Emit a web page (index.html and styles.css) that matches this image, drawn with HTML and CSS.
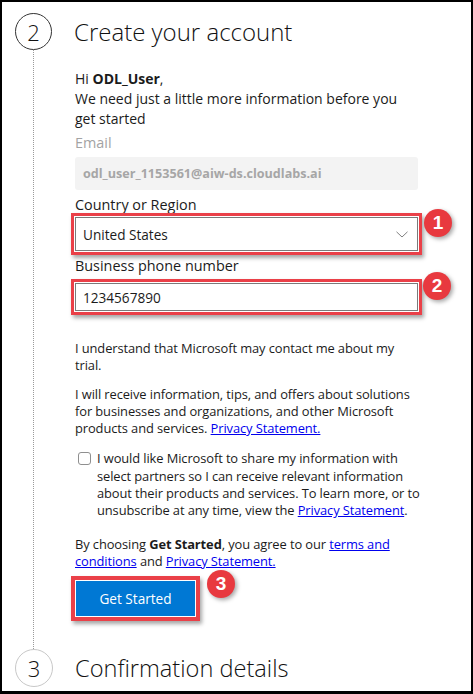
FILE: index.html
```html
<!DOCTYPE html>
<html lang="en">
<head>
<meta charset="utf-8">
<title>Create your account</title>
<link rel="stylesheet" href="styles.css">
</head>
<body>
<div class="frame">
  <div class="timeline">
    <div class="step-head step-head--current">
      <div class="step-num">2</div>
      <h1 class="step-title">Create your account</h1>
    </div>
    <div class="step-body">
      <p class="greeting">Hi <b>ODL_User</b>,<br>We need just a little more information before you<br>get started</p>
      <div class="label label--muted">Email</div>
      <div class="readonly">odl_user_1153561@aiw-ds.cloudlabs.ai</div>
      <div class="label label--country">Country or Region</div>
      <div class="callout callout--select">
        <div class="select">
          <span>United States</span>
          <svg class="chevron" width="12" height="7" viewBox="0 0 12 7"><polyline points="0.5,0.8 6,6 11.5,0.8" fill="none" stroke="#808080" stroke-width="1"/></svg>
        </div>
        <span class="badge badge--one">1</span>
      </div>
      <div class="label label--phone">Business phone number</div>
      <div class="callout callout--phone">
        <div class="input">1234567890</div>
        <span class="badge badge--two">2</span>
      </div>
      <p class="para para--first">I understand that Microsoft may contact me about my<br>trial.</p>
      <p class="para para--second">I will receive information, tips, and offers about solutions<br>for businesses and organizations, and other Microsoft<br>products and services. <a href="#">Privacy Statement.</a></p>
      <div class="check-row">
        <span class="checkbox"></span>
        <p class="para">I would like Microsoft to share my information with<br>select partners so I can receive relevant information<br>about their products and services. To learn more, or to<br>unsubscribe at any time, view the <a href="#">Privacy Statement</a>.</p>
      </div>
      <p class="para para--agree">By choosing <b>Get Started</b>, you agree to our <a href="#">terms and<br>conditions</a> and <a href="#">Privacy Statement.</a></p>
      <div class="callout callout--button">
        <button class="btn" type="button">Get Started</button>
        <span class="badge badge--three">3</span>
      </div>
    </div>
    <div class="step-head step-head--next">
      <div class="step-num step-num--light">3</div>
      <h2 class="step-title">Confirmation details</h2>
    </div>
  </div>
</div>
</body>
</html>
```

FILE: styles.css
```css
* { box-sizing: border-box; }
html, body { margin: 0; padding: 0; background: #fff; }
body {
  font-family: "Open Sans", "Noto Sans", sans-serif;
  color: #1b1b1b;
}
.frame {
  width: 473px;
  height: 694px;
  border: 2px solid #000;
  border-bottom-width: 3px;
  overflow: hidden;
  background: #fff;
}
.timeline {
  position: relative;
}
.timeline::before {
  content: "";
  position: absolute;
  left: 31px;
  top: 0;
  height: 650px;
  border-left: 1px dotted #9a9a9a;
}
.step-head {
  position: relative;
  display: flex;
  align-items: center;
  gap: 22px;
  padding-left: 13px;
}
.step-head--current { margin-top: 11px; }
.step-head--next { margin-top: 28px; }
.step-num {
  width: 37px;
  height: 37px;
  border-radius: 50%;
  border: 1px solid #333;
  background: #fff;
  display: flex;
  align-items: center;
  justify-content: center;
  font-size: 22px;
  font-weight: 300;
  color: #111;
  flex: none;
}
.step-num--light { border-color: #c8c8c8; width: 38px; height: 38px; }
.step-title {
  margin: 0;
  font-size: 24px;
  font-weight: 300;
  line-height: 30px;
  color: #111;
}
.step-head--next .step-title { font-size: 23.6px; }
.step-body {
  padding-left: 73px;
  padding-top: 19px;
  font-size: 12.9px;
}
.greeting {
  margin: 0;
  line-height: 20px;
  font-size: 14px;
}
.greeting b { font-weight: 700; }
.label {
  font-size: 14.4px;
  line-height: 20px;
  margin-top: 4px;
}
.label--muted { color: #a3a3a3; }
.label--country { margin-top: 5px; }
.label--phone { margin-top: 1px; }
.readonly {
  margin-top: 4px;
  width: 343px;
  height: 33px;
  background: #f3f3f3;
  border-radius: 3px;
  padding-left: 8px;
  display: flex;
  align-items: center;
  font-weight: 700;
  color: #a6a6a6;
  font-size: 12.6px;
}
.callout {
  position: relative;
  margin-left: -4px;
  border: 3px solid #ea4048;
  padding: 1px;
  box-shadow: 2px 3px 4px rgba(0,0,0,.35);
}
.callout--select {
  width: 351px;
  margin-top: -2px;
}
.callout--phone {
  width: 351px;
  margin-top: 3px;
}
.callout--button {
  width: 129px;
  margin-top: 6px;
  border-width: 4px;
  padding: 1px;
}
.select, .input {
  height: 34px;
  border: 1px solid #7a7a7a;
  background: #fff;
  display: flex;
  align-items: center;
  justify-content: space-between;
  padding: 0 8px 0 7px;
  font-size: 13.6px;
  color: #1b1b1b;
}
.input { height: 28px; }
.chevron { margin-right: 1px; }
.badge {
  position: absolute;
  width: 28px;
  height: 28px;
  border-radius: 50%;
  background: #e8393f;
  color: #fff;
  font-family: "Liberation Sans", Arial, sans-serif;
  font-size: 19px;
  font-weight: 700;
  display: flex;
  align-items: center;
  justify-content: center;
  box-shadow: 2px 2px 4px rgba(0,0,0,.35);
}
.badge--one { left: 350px; top: -7px; }
.badge--two { left: 349px; top: -10px; }
.badge--three { left: 132px; top: -10px; }
.para {
  margin: 0;
  line-height: 17.3px;
  letter-spacing: -0.1px;
}
.para--first { margin-top: 25px; }
.para--second { margin-top: 11px; }
.para--agree { margin-top: 16px; }
a { color: #0000ee; text-decoration: underline; }
.check-row {
  display: flex;
  gap: 6px;
  margin-top: 13px;
  padding-left: 3px;
}
.checkbox {
  flex: none;
  width: 13px;
  height: 13px;
  margin-top: 2px;
  border: 1px solid #8f8f8f;
  border-radius: 3px;
  background: #fff;
}
.btn {
  display: block;
  width: 119px;
  height: 35px;
  border: 0;
  background: #0078d4;
  color: #fff;
  font-family: inherit;
  font-size: 13.6px;
  padding: 0;
}
```
